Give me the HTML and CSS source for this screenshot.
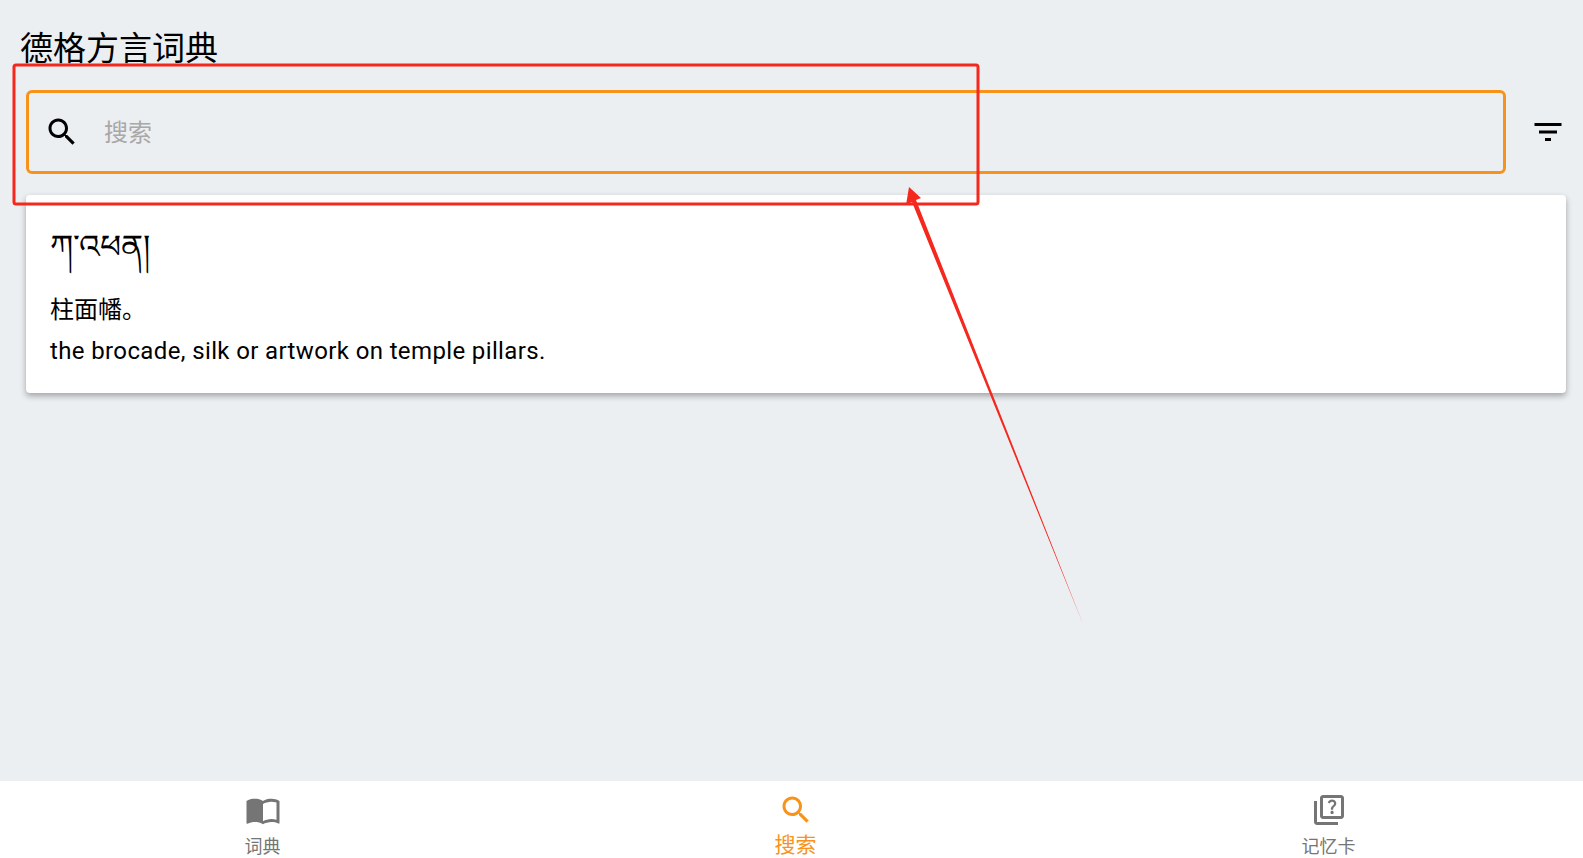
FILE: index.html
```html
<!doctype html>
<html lang="zh">
  <head>
    <meta charset="UTF-8" />
    <meta name="viewport" content="width=device-width, initial-scale=1.0" />
    <title>德格方言词典</title>
    <link rel="stylesheet" href="styles.css">
  </head>
  <body>
    <div class="app">
      <div class="main">
        <h1 class="title">德格方言词典</h1>
        <div class="search-row">
          <div class="search-box">
            <svg class="icon" viewBox="0 0 24 24"><path d="M15.5 14h-.79l-.28-.27C15.41 12.59 16 11.11 16 9.5 16 5.91 13.09 3 9.5 3S3 5.91 3 9.5 5.91 16 9.5 16c1.61 0 3.09-.59 4.23-1.57l.27.28v.79l5 4.99L20.49 19l-4.99-5zm-6 0C7.01 14 5 11.99 5 9.5S7.01 5 9.5 5 14 7.01 14 9.5 11.99 14 9.5 14z"/></svg>
            <span class="hint">搜索</span>
          </div>
          <svg class="icon filter" viewBox="0 0 24 24"><path d="M10 18h4v-2h-4v2zM3 6v2h18V6H3zm3 7h12v-2H6v2z"/></svg>
        </div>
        <div class="card">
          <div class="word">ཀ་འཕན།</div>
          <div class="zh">柱面幡。</div>
          <div class="en">the brocade, silk or artwork on temple pillars.</div>
        </div>
      </div>
      <nav class="nav">
        <div class="nav-item">
          <svg class="icon" viewBox="0 0 24 24"><path d="M21 5c-1.11-.35-2.33-.5-3.5-.5-1.95 0-4.05.4-5.5 1.5-1.45-1.1-3.55-1.5-5.5-1.5S2.45 4.9 1 6v14.65c0 .25.25.5.5.5.1 0 .15-.05.25-.05C3.1 20.45 5.05 20 6.5 20c1.95 0 4.05.4 5.5 1.5 1.35-.85 3.8-1.5 5.5-1.5 1.65 0 3.35.3 4.75 1.05.1.05.15.05.25.05.25 0 .5-.25.5-.5V6c-.6-.45-1.25-.75-2-1zm0 13.5c-1.1-.35-2.3-.5-3.5-.5-1.7 0-4.15.65-5.5 1.5V8c1.35-.85 3.8-1.5 5.5-1.5 1.2 0 2.4.15 3.5.5v11.5z"/></svg>
          <span>词典</span>
        </div>
        <div class="nav-item active">
          <svg class="icon" viewBox="0 0 24 24"><path d="M15.5 14h-.79l-.28-.27C15.41 12.59 16 11.11 16 9.5 16 5.91 13.09 3 9.5 3S3 5.91 3 9.5 5.91 16 9.5 16c1.61 0 3.09-.59 4.23-1.57l.27.28v.79l5 4.99L20.49 19l-4.99-5zm-6 0C7.01 14 5 11.99 5 9.5S7.01 5 9.5 5 14 7.01 14 9.5 11.99 14 9.5 14z"/></svg>
          <span>搜索</span>
        </div>
        <div class="nav-item">
          <svg class="icon" viewBox="0 0 24 24"><path d="M4 6H2v14c0 1.1.9 2 2 2h14v-2H4V6zm16-4H8c-1.1 0-2 .9-2 2v12c0 1.1.9 2 2 2h12c1.1 0 2-.9 2-2V4c0-1.1-.9-2-2-2zm0 14H8V4h12v12zm-6.49-5.84c.41-.73 1.18-1.16 1.63-1.8.48-.68.21-1.94-1.14-1.94-.88 0-1.32.67-1.5 1.23l-1.37-.57C11.51 5.96 12.52 5 13.99 5c1.23 0 2.08.56 2.51 1.26.37.6.58 1.73.01 2.57-.63.93-1.23 1.21-1.56 1.81-.13.24-.18.4-.18 1.18h-1.52c.01-.41-.06-1.08.26-1.66zm-.56 3.44c0-.65.5-1.1 1.1-1.1.61 0 1.1.45 1.1 1.1 0 .59-.47 1.1-1.1 1.1-.62 0-1.1-.45-1.1-1.1z"/></svg>
          <span>记忆卡</span>
        </div>
      </nav>

      <!-- red markup drawn over the screenshot -->
      <svg class="markup" viewBox="0 0 1583 858">
        <rect x="14" y="65" width="964" height="139" rx="2" class="mark-box" />
        <polygon points="909,187 921,198 916,200 1083,624 912,202 906,205" class="mark-arrow" />
      </svg>
    </div>
  </body>
</html>
```

FILE: styles.css
```css
* {
  padding: 0;
  margin: 0;
  box-sizing: border-box;
}
body {
  background-color: #eceff2;
  font-family: Roboto, "Noto Sans CJK SC", "Noto Sans", sans-serif;
  color: #000;
}
.app {
  position: relative;
  display: flex;
  flex-direction: column;
  height: 858px;
  overflow: hidden;
}
.main {
  flex: 1;
  padding: 26px 17px 0 26px;
}
.title {
  font-size: 33px;
  font-weight: 400;
  line-height: 46px;
  margin-left: -6px;
}
.search-row {
  display: flex;
  align-items: center;
  margin-top: 18px;
}
.search-box {
  flex: 1;
  height: 84px;
  display: flex;
  align-items: center;
  padding-left: 15px;
  border: 3px solid #f7931a;
  border-radius: 6px;
}
.icon {
  width: 36px;
  height: 36px;
  flex: none;
  fill: currentColor;
}
.hint {
  margin-left: 24px;
  margin-bottom: 4px;
  font-size: 24px;
  color: #a8a8a8;
}
.filter {
  margin-left: 24px;
}
.card {
  margin-top: 21px;
  height: 198px;
  padding: 26px 24px 0;
  background-color: #fff;
  border-radius: 4px;
  box-shadow: 0 3px 6px rgba(0, 0, 0, 0.32);
}
.word {
  font-size: 33px;
  line-height: 52px;
}
.zh {
  font-size: 24px;
  line-height: 40px;
  margin-top: 17px;
}
.en {
  font-size: 24px;
  line-height: 40px;
  margin-top: 1px;
  letter-spacing: 0.37px;
}
.nav {
  height: 77px;
  margin-left: -4px;
  display: grid;
  grid-template-columns: repeat(3, 533px);
  background-color: #fff;
}
.nav-item {
  display: flex;
  flex-direction: column;
  align-items: center;
  gap: 6px;
  padding-top: 11px;
  font-size: 18px;
  line-height: 26px;
  color: #757575;
}
.nav-item.active {
  gap: 4px;
  font-size: 21px;
  color: #f7931a;
}
.markup {
  position: absolute;
  left: 0;
  top: 0;
  width: 1583px;
  height: 858px;
  pointer-events: none;
}
.mark-box {
  fill: none;
  stroke: #f5281e;
  stroke-width: 3;
}
.mark-arrow {
  fill: #f5281e;
}
```
